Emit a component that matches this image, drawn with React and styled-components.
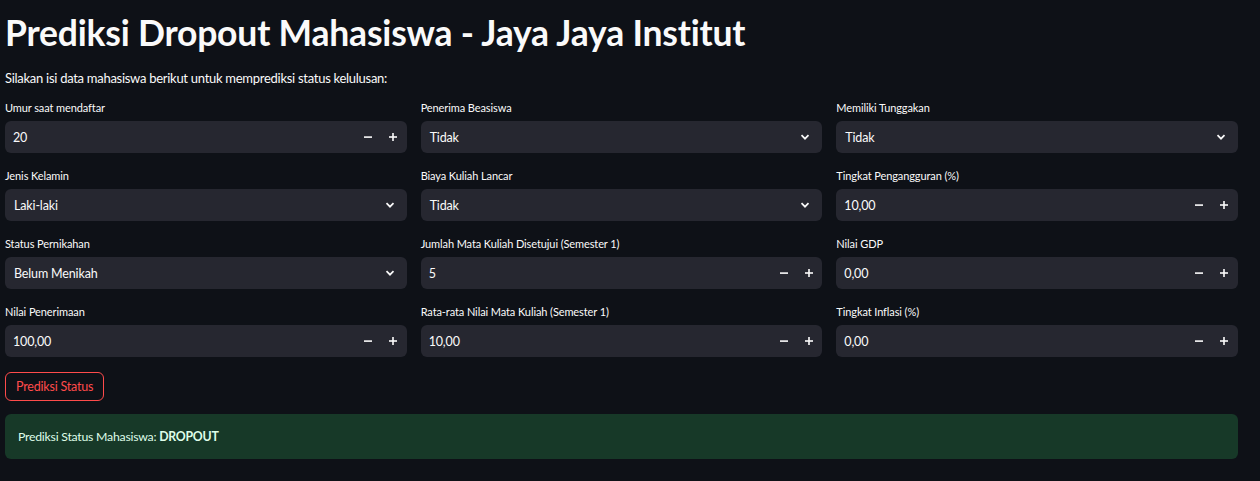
import React from "react";
import styled, { createGlobalStyle } from "styled-components";

const Global = createGlobalStyle`
  html, body { margin: 0; padding: 0; background: #0e1117; }
  body { font-family: "Lato", "Noto Sans", sans-serif; color: #fafafa; }
  * { box-sizing: border-box; }
`;

const Page = styled.div`
  width: 1260px;
  min-height: 481px;
  background: #0e1117;
  padding: 12px 22px 0 5px;
`;

const Title = styled.h1`
  margin: 0;
  font-size: 35.5px;
  font-weight: 700;
  line-height: 42px;
  letter-spacing: -0.2px;
  color: #fafafa;
`;

const Intro = styled.p`
  margin: 14px 0 0 0;
  font-size: 13px;
  line-height: 20px;
  letter-spacing: -0.28px;
`;

const Grid = styled.div`
  display: grid;
  grid-template-columns: repeat(3, 1fr);
  column-gap: 14px;
  row-gap: 16px;
  margin-top: 13px;
`;

const Field = styled.div`
  display: flex;
  flex-direction: column;
`;

const Label = styled.label`
  font-size: 11px;
  line-height: 14px;
  height: 14px;
  margin-bottom: 6px;
  letter-spacing: -0.1px;
  color: #fafafa;
`;

const Box = styled.div`
  height: 32px;
  background: #262730;
  border-radius: 6px;
  display: flex;
  align-items: center;
  padding-left: ${(p) => (p.$select ? "9px" : "8px")};
  padding-right: ${(p) => (p.$select ? "11px" : "1px")};
  font-size: 12.5px;
  letter-spacing: -0.15px;
`;

const Value = styled.span`
  flex: 1;
  color: #fafafa;
`;

const Step = styled.span`
  width: 25px;
  height: 32px;
  display: flex;
  align-items: center;
  justify-content: center;
`;

const Button = styled.button`
  margin-top: 15px;
  height: 29px;
  padding: 0 10px;
  background: transparent;
  border: 1px solid #ff4b4b;
  border-radius: 6px;
  color: #ff4b4b;
  font-family: inherit;
  font-size: 12.5px;
  letter-spacing: -0.2px;
`;

const Alert = styled.div`
  margin-top: 13px;
  height: 45px;
  background: #173928;
  border-radius: 6px;
  padding: 0 13px;
  display: flex;
  align-items: center;
  font-size: 12.3px;
  letter-spacing: -0.25px;
  color: #dffde9;
  b { font-weight: 700; }
`;

const Minus = () => (
  <svg width="10" height="10" viewBox="0 0 10 10">
    <rect x="1" y="4.3" width="8" height="1.6" fill="#fafafa" />
  </svg>
);
const Plus = () => (
  <svg width="10" height="10" viewBox="0 0 10 10">
    <rect x="1" y="4.2" width="8" height="1.6" fill="#fafafa" />
    <rect x="4.2" y="1" width="1.6" height="8" fill="#fafafa" />
  </svg>
);
const Chevron = () => (
  <svg width="12" height="12" viewBox="0 0 12 12">
    <path d="M2.5 4.2 L6 7.7 L9.5 4.2" fill="none" stroke="#fafafa" strokeWidth="1.7" />
  </svg>
);

const fields = [
  ["Umur saat mendaftar", "num", "20"],
  ["Penerima Beasiswa", "sel", "Tidak"],
  ["Memiliki Tunggakan", "sel", "Tidak"],
  ["Jenis Kelamin", "sel", "Laki-laki"],
  ["Biaya Kuliah Lancar", "sel", "Tidak"],
  ["Tingkat Pengangguran (%)", "num", "10,00"],
  ["Status Pernikahan", "sel", "Belum Menikah"],
  ["Jumlah Mata Kuliah Disetujui (Semester 1)", "num", "5"],
  ["Nilai GDP", "num", "0,00"],
  ["Nilai Penerimaan", "num", "100,00"],
  ["Rata-rata Nilai Mata Kuliah (Semester 1)", "num", "10,00"],
  ["Tingkat Inflasi (%)", "num", "0,00"],
];

export default function App() {
  return (
    <>
      <Global />
      <Page>
        <Title>Prediksi Dropout Mahasiswa - Jaya Jaya Institut</Title>
        <Intro>Silakan isi data mahasiswa berikut untuk memprediksi status kelulusan:</Intro>
        <Grid>
          {fields.map(([label, kind, value]) => (
            <Field key={label}>
              <Label>{label}</Label>
              {kind === "num" ? (
                <Box>
                  <Value>{value}</Value>
                  <Step><Minus /></Step>
                  <Step><Plus /></Step>
                </Box>
              ) : (
                <Box $select>
                  <Value>{value}</Value>
                  <Chevron />
                </Box>
              )}
            </Field>
          ))}
        </Grid>
        <Button>Prediksi Status</Button>
        <Alert>
          <span>Prediksi Status Mahasiswa: <b>DROPOUT</b></span>
        </Alert>
      </Page>
    </>
  );
}
